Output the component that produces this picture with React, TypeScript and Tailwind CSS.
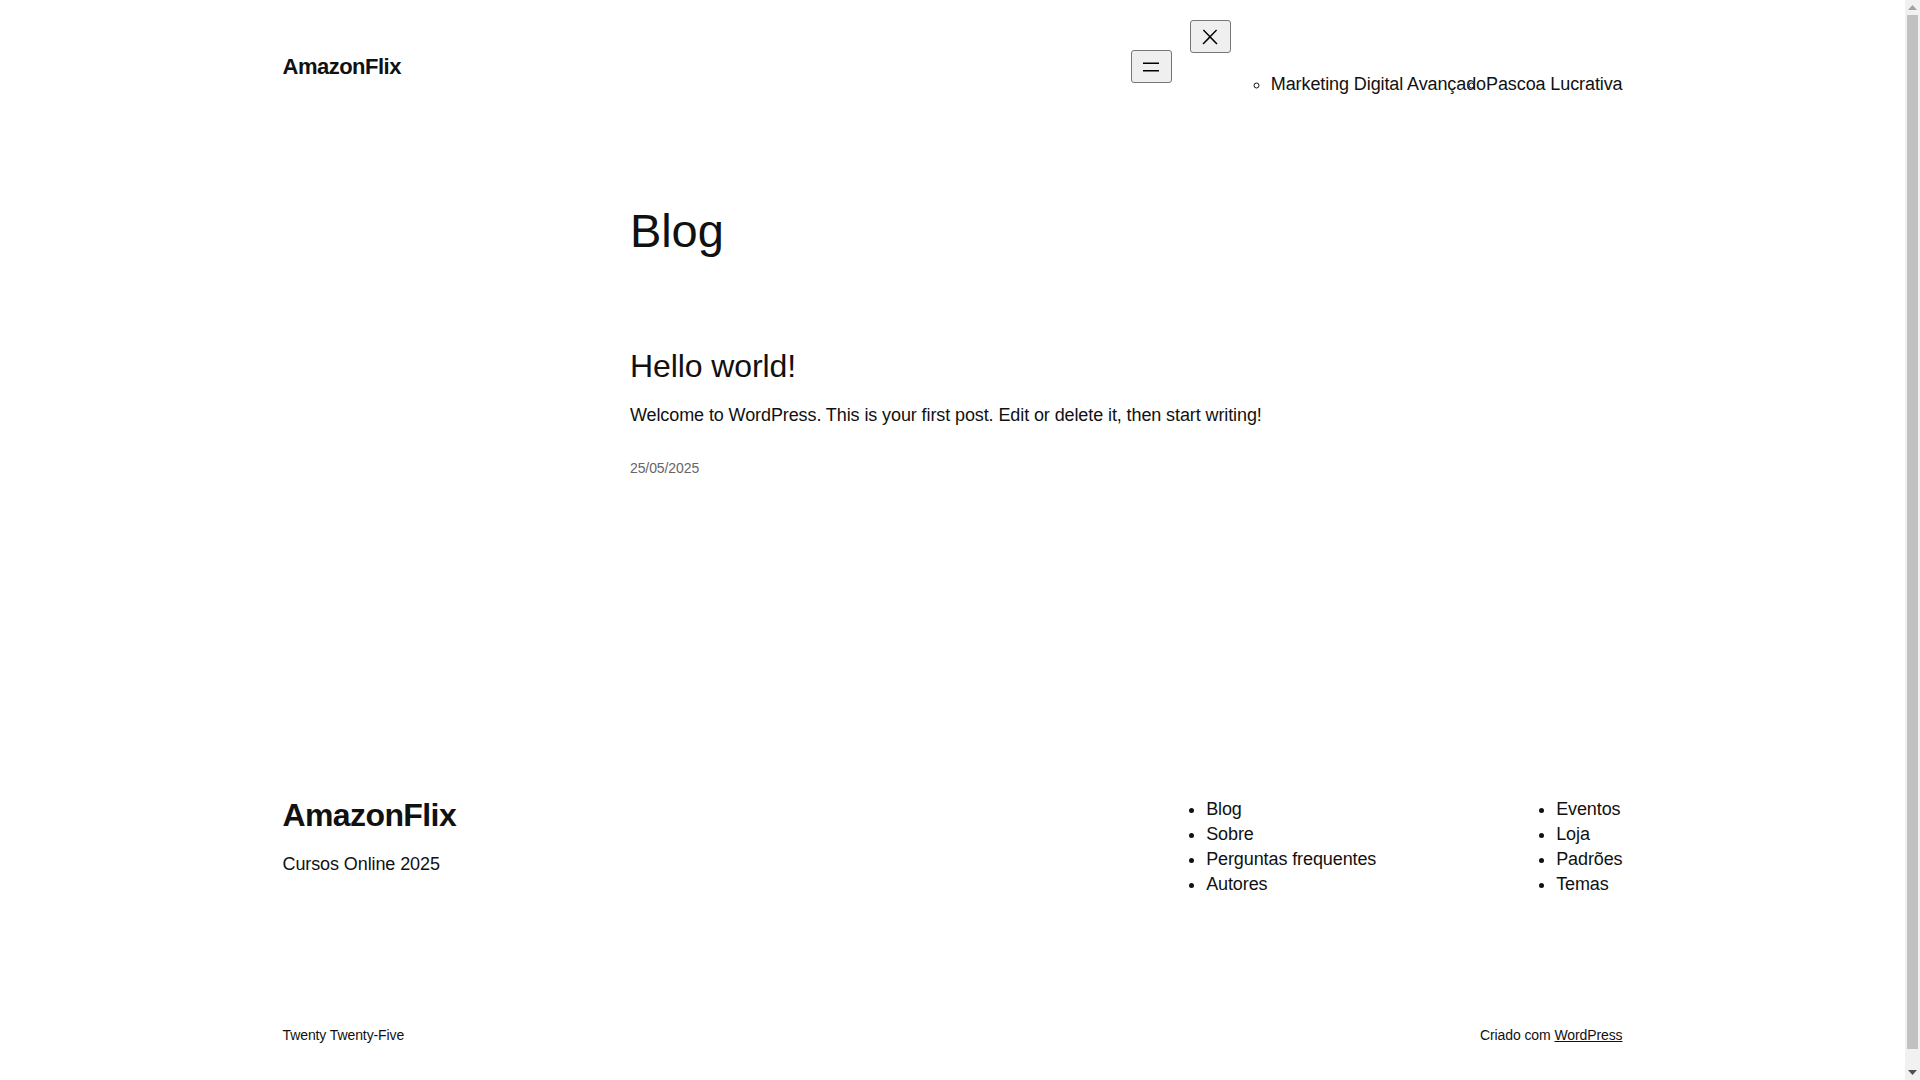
const headerLinks = ["Marketing Digital Avançado", "Pascoa Lucrativa"];
const footerCol1 = ["Blog", "Sobre", "Perguntas frequentes", "Autores"];
const footerCol2 = ["Eventos", "Loja", "Padrões", "Temas"];

const MenuIcon = () => (
  <svg width="24" height="24" viewBox="0 0 24 24" fill="currentColor" aria-hidden="true">
    <rect x="4" y="7.5" width="16" height="1.5" />
    <rect x="4" y="15" width="16" height="1.5" />
  </svg>
);

const CloseIcon = () => (
  <svg width="24" height="24" viewBox="0 0 24 24" fill="currentColor" aria-hidden="true">
    <path d="M13 11.8l6.1-6.3-1-1-6.1 6.2-6.1-6.2-1 1 6.1 6.3-6.5 6.7 1 1 6.5-6.6 6.5 6.6 1-1z" />
  </svg>
);

// browser scrollbar as it appears in the screenshot
const Scrollbar = () => (
  <div className="fixed top-0 right-0 w-[15px] h-[1080px] bg-[#f1f1f1] flex flex-col items-center">
    <div className="h-[15px] flex items-center justify-center">
      <svg width="9" height="5" viewBox="0 0 9 5" aria-hidden="true">
        <path d="M0 5L4.5 0L9 5z" fill="#a3a3a3" />
      </svg>
    </div>
    <div className="w-[11px] h-[1034px] bg-[#c1c1c1]" />
    <div className="flex-1" />
    <div className="h-[15px] flex items-center justify-center">
      <svg width="9" height="5" viewBox="0 0 9 5" aria-hidden="true">
        <path d="M0 0L9 0L4.5 5z" fill="#505050" />
      </svg>
    </div>
  </div>
);

export default function App() {
  return (
    <div className="h-[1080px] overflow-hidden bg-white text-[#111111] tracking-[-0.1px] font-['Liberation_Sans',Arial,sans-serif]">
      <div className="w-[1905px]">
        {/* Header */}
        <header className="w-[1340px] mx-auto pt-[20px] flex items-center justify-between">
          <a href="#" className="text-[22px] font-bold tracking-[-0.5px] leading-[1.2] mt-[1px]">
            AmazonFlix
          </a>
          <nav className="flex items-center gap-[18px]">
            <button className="w-[41px] h-[33px] flex items-center justify-center bg-[#efefef] border border-[#767676] rounded-[3px] text-black">
              <MenuIcon />
            </button>
            <div className="flex flex-col items-start">
              <button className="w-[41px] h-[33px] flex items-center justify-center bg-[#efefef] border border-[#767676] rounded-[3px] text-black">
                <CloseIcon />
              </button>
              <ul className="mt-[20px] mb-[18px] pl-[81px] flex list-[circle] text-[18px] leading-[22px]">
                {headerLinks.map((link) => (
                  <li key={link} className="list-item">
                    <a href="#">{link}</a>
                  </li>
                ))}
              </ul>
            </div>
          </nav>
        </header>

        {/* Main */}
        <main className="w-[645px] mx-auto">
          <h1 className="mt-[90px] text-[47px] leading-[55px]">Blog</h1>
          <article className="mt-[90px]">
            <h2 className="text-[32px] leading-[37px]">
              <a href="#">Hello world!</a>
            </h2>
            <p className="mt-[17px] text-[18px] leading-[27px]">
              Welcome to WordPress. This is your first post. Edit or delete it, then start writing!
            </p>
            <div className="mt-[29px] text-[14px] leading-[21px] text-[#666666]">25/05/2025</div>
          </article>
        </main>

        {/* Footer */}
        <footer className="w-[1340px] mx-auto mt-[317px]">
          <div className="flex items-start justify-between">
            <div>
              <div className="text-[32px] font-bold tracking-[-0.6px] leading-[38px]">AmazonFlix</div>
              <p className="mt-[17px] text-[18px] leading-[27px]">Cursos Online 2025</p>
            </div>
            <div className="flex text-[18px] leading-[25px] pt-[1px]">
              <ul className="w-[350px] pl-[40px] list-disc">
                {footerCol1.map((item) => (
                  <li key={item}>
                    <a href="#">{item}</a>
                  </li>
                ))}
              </ul>
              <ul className="pl-[40px] list-disc">
                {footerCol2.map((item) => (
                  <li key={item}>
                    <a href="#">{item}</a>
                  </li>
                ))}
              </ul>
            </div>
          </div>
          <div className="mt-[128px] flex justify-between text-[14px] leading-[21px]">
            <span>Twenty Twenty-Five</span>
            <span>
              Criado com <a href="#" className="underline">WordPress</a>
            </span>
          </div>
        </footer>
      </div>
      <Scrollbar />
    </div>
  );
}
